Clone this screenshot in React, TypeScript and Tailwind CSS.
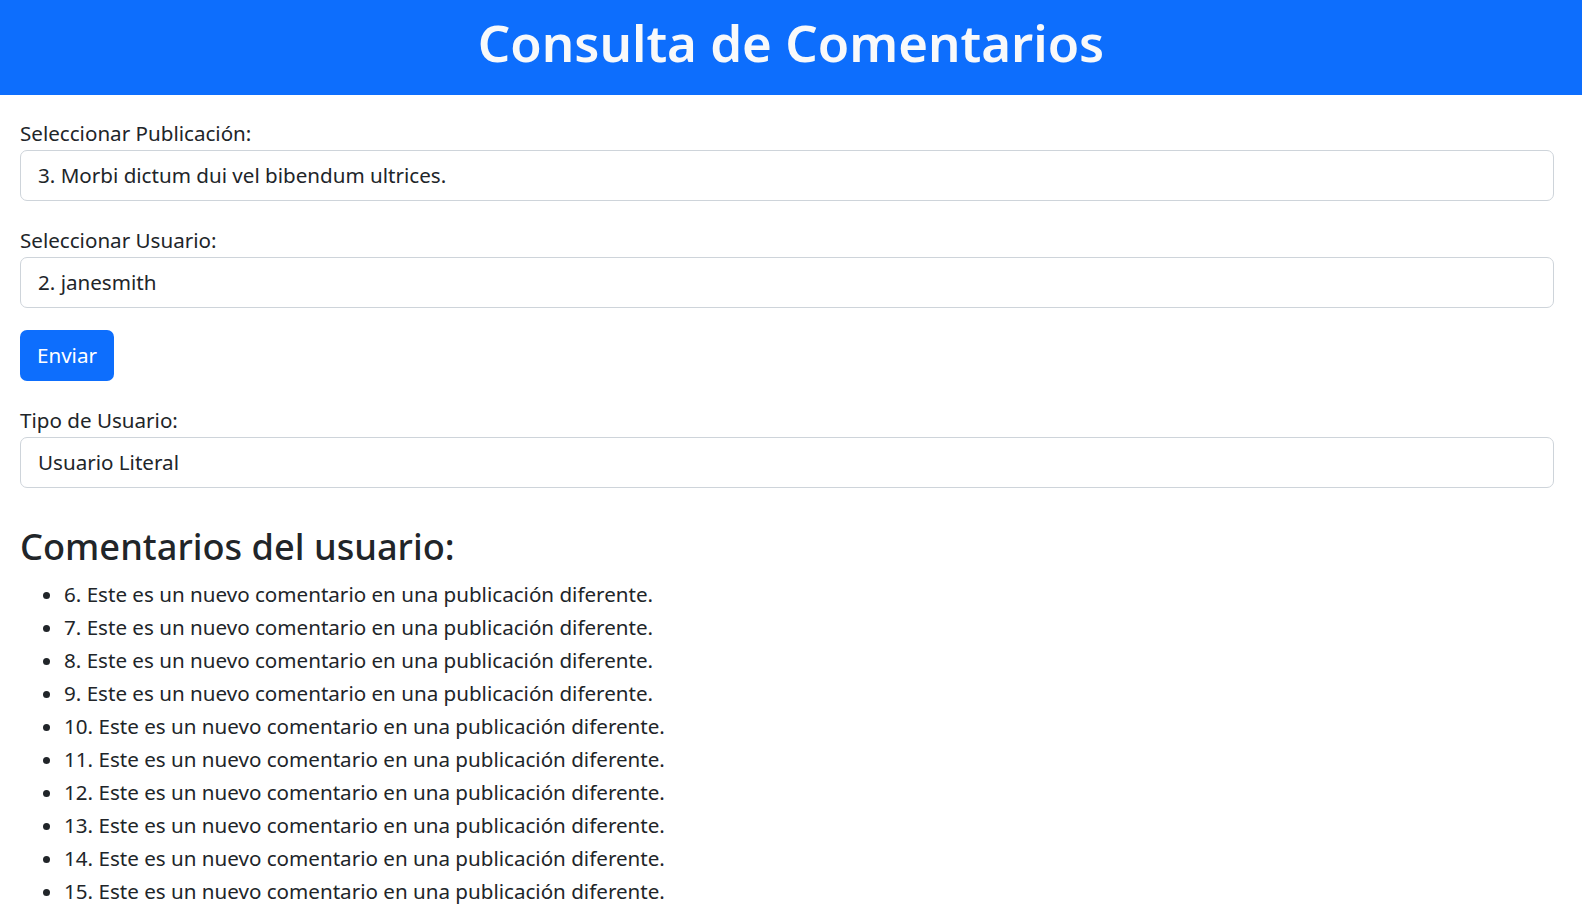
const comentarios = [6, 7, 8, 9, 10, 11, 12, 13, 14, 15].map(
  (n) => `${n}. Este es un nuevo comentario en una publicación diferente.`
);

function Campo({ label, value, className }: { label: string; value: string; className: string }) {
  return (
    <div className={className}>
      <label className="block text-[20.6px] leading-[33px]">{label}</label>
      <div className="h-[51px] border border-[#ced4da] rounded-[7px] px-[17px] flex items-center text-[20.6px]">
        {value}
      </div>
    </div>
  );
}

export default function App() {
  return (
    <div className="min-h-screen bg-white font-['Noto_Sans',sans-serif] text-[#212529]">
      <header className="h-[95px] bg-[#0d6efd] flex items-center justify-center pb-[10px]">
        <h1 className="text-[51px] font-semibold text-[#f8f9fa] leading-none">Consulta de Comentarios</h1>
      </header>

      <main className="pl-[20px] pr-[28px] pt-[22px]">
        <Campo className="mb-[23px]" label="Seleccionar Publicación:" value="3. Morbi dictum dui vel bibendum ultrices." />
        <Campo className="mb-[22px]" label="Seleccionar Usuario:" value="2. janesmith" />
        <button className="h-[51px] w-[94px] bg-[#0d6efd] text-white rounded-[7px] text-[20.6px] mb-[23px]">
          Enviar
        </button>
        <Campo className="mb-[34px]" label="Tipo de Usuario:" value="Usuario Literal" />

        <h2 className="text-[36.2px] font-medium leading-[48px] mb-[8px]">Comentarios del usuario:</h2>
        <ul className="list-disc pl-[44px] text-[20.6px] leading-[33px]">
          {comentarios.map((c) => (
            <li key={c}>{c}</li>
          ))}
        </ul>
      </main>
    </div>
  );
}
